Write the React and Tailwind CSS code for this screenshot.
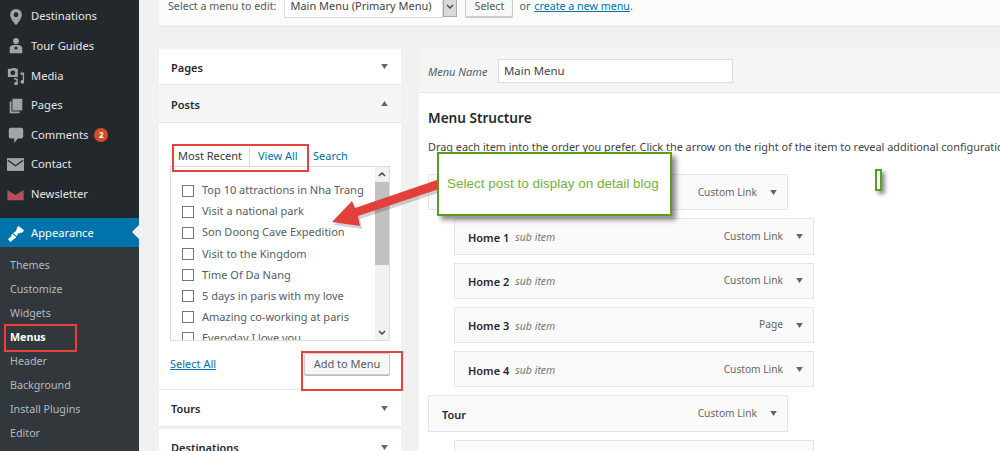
import React from "react";

const uiFont = { fontFamily: '"Noto Sans", "Open Sans", sans-serif' };

const PinIcon = () => (
  <svg viewBox="0 0 20 20" className="w-[18px] h-[18px]" fill="#a0a5aa">
    <path fillRule="evenodd" d="M10 1a6.5 6.5 0 0 0-6.5 6.5c0 3.6 4.2 9.4 6.5 11.5 2.3-2.1 6.5-7.9 6.5-11.5A6.5 6.5 0 0 0 10 1zm0 9.2a2.7 2.7 0 1 1 0-5.4 2.7 2.7 0 0 1 0 5.4z" />
  </svg>
);
const GuideIcon = () => (
  <svg viewBox="0 0 20 20" className="w-[18px] h-[18px]" fill="#a0a5aa">
    <path fillRule="evenodd" d="M10 1a3.3 3.3 0 0 1 3.3 3.5c0 1.9-1.4 3.5-3.3 3.5S6.7 6.4 6.7 4.5A3.3 3.3 0 0 1 10 1zM3 18v-5.500C3 10.500 5 9 7.500 9h5c2.500 0 4.500 1.500 4.500 3.500V18H3zm7-7.500a1.800 1.800 0 1 0 0 3.600 1.800 1.800 0 0 0 0-3.600z" />
  </svg>
);
const MediaIcon = () => (
  <svg viewBox="0 0 20 20" className="w-[18px] h-[18px]" fill="#a0a5aa">
    <path fillRule="evenodd" d="M1 2h4l1-1h3l1 1h2v9H1V2zm5.500 1.800a2.700 2.700 0 1 0 0 5.400 2.700 2.700 0 0 0 0-5.400zM14 6h5v10.500a2 2 0 1 1-1.500-1.900V8.500H15V6zM8 12l4 1v5.500a2 2 0 1 1-1.500-1.900V14.500L8 14v-2z" />
  </svg>
);
const PagesIcon = () => (
  <svg viewBox="0 0 20 20" className="w-[18px] h-[18px]" fill="#a0a5aa">
    <path d="M6 2h11v13H6V2zM3 5h2v11h9v2H3V5z" />
  </svg>
);
const CommentIcon = () => (
  <svg viewBox="0 0 20 20" className="w-[18px] h-[18px]" fill="#a0a5aa">
    <path d="M4 2h12a2 2 0 0 1 2 2v8a2 2 0 0 1-2 2h-4l-4 5v-5H4a2 2 0 0 1-2-2V4a2 2 0 0 1 2-2z" />
  </svg>
);
const MailIcon = () => (
  <svg viewBox="0 0 20 15" className="w-[17px] h-[13px]">
    <rect width="20" height="15" fill="#a0a5aa" />
    <path d="M1 2.5 10 9l9-6.5" fill="none" stroke="#23282d" strokeWidth="1.6" />
  </svg>
);
const NewsletterIcon = () => (
  <svg viewBox="0 0 20 16" className="w-[17px] h-[13px]" fill="#b5505f">
    <path d="M0 2.5 10 8.5l10-6V15H0V2.500z" />
  </svg>
);
const BrushIcon = () => (
  <svg viewBox="0 0 20 20" className="w-[18px] h-[18px]" fill="#ffffff">
    <path d="M10.5 3.5 13 1l6 5-2.500 3-1-1-1.500 1.500-1-.5-2.500 3.500-3.500-3.500 3.500-2.500-.5-1 1.500-1.500-1-1zM6 9.500l4.500 4.500-3 1.500L4 19l-3-3 3.500-3.500L6 9.500z" />
  </svg>
);

const topMenu = [
  { label: "Destinations", icon: <PinIcon /> },
  { label: "Tour Guides", icon: <GuideIcon /> },
  { label: "Media", icon: <MediaIcon /> },
  { label: "Pages", icon: <PagesIcon /> },
  { label: "Comments", icon: <CommentIcon />, badge: 2 },
  { label: "Contact", icon: <MailIcon /> },
  { label: "Newsletter", icon: <NewsletterIcon /> },
];

const subMenu = ["Themes", "Customize", "Widgets", "Menus", "Header", "Background", "Install Plugins", "Editor"];

const posts = [
  "Top 10 attractions in Nha Trang",
  "Visit a national park",
  "Son Doong Cave Expedition",
  "Visit to the Kingdom",
  "Time Of Da Nang",
  "5 days in paris with my love",
  "Amazing co-working at paris",
  "Everyday I love you",
];

// the first title sits under the callout and the last one below the fold
const menuItems = [
  { type: "Custom Link" },
  { title: "Home 1", sub: true, type: "Custom Link" },
  { title: "Home 2", sub: true, type: "Custom Link" },
  { title: "Home 3", sub: true, type: "Page" },
  { title: "Home 4", sub: true, type: "Custom Link" },
  { title: "Tour", type: "Custom Link" },
  { sub: true },
];

const Caret = ({ up }) => (
  <svg viewBox="0 0 8 6" className="w-[7px] h-[5px]" fill="#60686e">
    <path d={up ? "M4 0 8 6H0z" : "M0 0h8L4 6z"} />
  </svg>
);

const Sidebar = () => (
  <aside className="w-[139px] shrink-0 bg-[#23282d] text-[11.2px] text-[#e4e6e7] pt-px">
    {topMenu.map((item) => (
      <div key={item.label} className="h-[29.6px] pt-[2px] flex items-center">
        <span className="w-[31px] flex justify-center shrink-0">{item.icon}</span>
        <span>{item.label}</span>
        {item.badge && (
          <span className="ml-[6px] w-[14px] h-[14px] rounded-full bg-[#d54e21] text-white text-[8px] font-bold flex items-center justify-center">
            {item.badge}
          </span>
        )}
      </div>
    ))}
    <div className="h-[29px] mt-[10px] pt-[2px] bg-[#0073aa] text-white flex items-center relative">
      <span className="w-[31px] flex justify-center shrink-0">
        <BrushIcon />
      </span>
      <span>Appearance</span>
      <span className="absolute right-0 top-[7px] border-y-[7px] border-y-transparent border-r-[7px] border-r-[#f1f1f1]" />
    </div>
    <div className="bg-[#32373c] h-[204px] pt-[6px] text-[10.7px] text-[#b4b9be]">
      {subMenu.map((label) => (
        <div key={label} className={`h-[24px] pl-[10px] flex items-center ${label === "Menus" ? "text-white font-bold" : ""}`}>
          {label}
        </div>
      ))}
    </div>
  </aside>
);

const TopBar = () => (
  <div className="h-[27px] shrink-0 bg-[#fbfbfb] border-b border-[#e5e5e5] flex items-center pl-[9px] pb-[13px] text-[10.7px] text-[#555d66] whitespace-nowrap">
    <span>Select a menu to edit:</span>
    <div className="ml-[8px] w-[159px] h-[23px] shrink-0 bg-white border border-[#ddd] flex items-center pl-[5px] text-[11px] text-[#444]">
      Main Menu (Primary Menu)
    </div>
    <div className="w-[14px] h-[21px] shrink-0 bg-[#d9d9d9] border border-[#aaa] flex items-center justify-center">
      <svg viewBox="0 0 8 5" className="w-[8px] h-[5px]" fill="none" stroke="#444" strokeWidth="1.3">
        <path d="m1 1 3 3 3-3" />
      </svg>
    </div>
    <div className="ml-[8px] w-[48px] h-[21px] shrink-0 bg-[#f7f7f7] border border-[#ccc] rounded-[2px] shadow-[0_1px_0_#ccc] flex items-center justify-center">
      Select
    </div>
    <span className="ml-[6px]">or</span>
    <span className="ml-[4px] text-[#0073aa] underline">create a new menu</span>
    <span>.</span>
  </div>
);

const AccordionHead = ({ title, up, className = "" }) => (
  <div className={`shrink-0 flex items-center justify-between pl-[12px] pr-[13px] font-semibold text-[11px] text-[#23282d] ${className}`}>
    <span className="pt-[3px]">{title}</span>
    <Caret up={up} />
  </div>
);

const PostsBox = () => (
  <div className="h-[267px] shrink-0 bg-white border-b border-[#e5e5e5] px-[11px] pt-[24px] text-[11px]">
    <div className="h-[19px] flex items-center">
      <span className="pl-[8px] w-[79px] text-[#32373c]">Most Recent</span>
      <span className="w-[64px] h-full pl-[8px] border-l border-[#ddd] flex items-center text-[#0073aa]">View All</span>
      <span className="text-[#0073aa]">Search</span>
    </div>
    <div className="h-[175px] w-[220px] border border-[#ddd] flex overflow-hidden">
      <div className="flex-1 pl-[11px] pt-[13px] overflow-hidden">
        {posts.map((post) => (
          <div key={post} className="h-[21.1px] flex items-center text-[#555d66] whitespace-nowrap">
            <span className="w-[12px] h-[12px] border border-[#777] bg-white shrink-0 mr-[8px]" />
            <span>{post}</span>
          </div>
        ))}
      </div>
      <div className="w-[14px] bg-[#f1f1f1] flex flex-col items-center shrink-0">
        <div className="h-[15px] flex items-center">
          <svg viewBox="0 0 8 5" className="w-[8px] h-[5px]" fill="none" stroke="#444" strokeWidth="1.5">
            <path d="m1 4 3-3 3 3" />
          </svg>
        </div>
        <div className="w-full h-[83px] bg-[#c1c1c1]" />
        <div className="mt-auto h-[15px] flex items-center">
          <svg viewBox="0 0 8 5" className="w-[8px] h-[5px]" fill="none" stroke="#444" strokeWidth="1.5">
            <path d="m1 1 3 3 3-3" />
          </svg>
        </div>
      </div>
    </div>
    <div className="flex items-center justify-between w-[220px] mt-[12px]">
      <span className="text-[#0073aa] underline">Select All</span>
      <div className="w-[86px] h-[22px] bg-[#f7f7f7] border border-[#ccc] rounded-[2px] shadow-[0_1px_0_#bbb] flex items-center justify-center text-[#555d66]">
        Add to Menu
      </div>
    </div>
  </div>
);

const LeftColumn = () => (
  <div className="w-[242px] shrink-0 flex flex-col">
    <AccordionHead title="Pages" className="h-[36px] bg-white border-b border-[#e5e5e5]" />
    <AccordionHead title="Posts" up className="h-[38px] bg-[#f5f5f5] border-b border-[#e5e5e5]" />
    <PostsBox />
    <AccordionHead title="Tours" className="h-[37px] bg-white border-b border-[#e5e5e5]" />
    <div className="h-[2px] shrink-0" />
    <AccordionHead title="Destinations" className="h-[36px] bg-white" />
  </div>
);

const MenuItem = ({ item }) => (
  <div className={`w-[360px] h-[36.3px] shrink-0 bg-[#fafafa] border border-[#e5e5e5] flex items-center pl-[13px] pr-[10px] ${item.sub ? "ml-[26px]" : ""}`}>
    {item.title && <span className="pt-[3px] font-semibold text-[11px] text-[#23282d]">{item.title}</span>}
    {item.title && item.sub && <span className="pt-[3px] ml-[6px] italic text-[10.5px] text-[#777]">sub item</span>}
    {item.type && <span className="ml-auto text-[10.2px] text-[#666]">{item.type}</span>}
    {item.type && (
      <span className="ml-[13px]">
        <Caret />
      </span>
    )}
  </div>
);

const RightPanel = () => (
  <div className="ml-[18px] flex-1 bg-white flex flex-col overflow-hidden">
    <div className="h-[44px] shrink-0 bg-[#f5f5f5] border-b border-[#e5e5e5] flex items-center pl-[9px]">
      <span className="pt-[3px] italic text-[11px] text-[#555d66] w-[70px]">Menu Name</span>
      <div className="w-[235px] h-[24px] pt-[1px] bg-white border border-[#ddd] flex items-center pl-[5px] text-[11.4px] text-[#444]">
        Main Menu
      </div>
    </div>
    <h2 className="mt-[14px] shrink-0 pl-[9px] font-semibold text-[13.6px] leading-[22px] text-[#23282d]">Menu Structure</h2>
    <p className="mt-[9px] shrink-0 pl-[9px] text-[10.9px] leading-[18px] text-[#444] whitespace-nowrap">
      Drag each item into the order you prefer. Click the arrow on the right of the item to reveal additional configuration options.
    </p>
    <div className="mt-[18px] pl-[9px] flex flex-col gap-[8px]">
      {menuItems.map((item, i) => (
        <MenuItem key={i} item={item} />
      ))}
    </div>
  </div>
);

const Annotations = () => (
  <>
    <div className="absolute left-[172px] top-[144px] w-[137px] h-[28px] border-[2.5px] border-[#e8413c]" />
    <div className="absolute left-[4px] top-[324px] w-[73px] h-[28px] border-[2.5px] border-[#e8413c]" />
    <div className="absolute left-[301px] top-[351px] w-[102px] h-[40px] border-[2.5px] border-[#e8413c]" />
    <svg className="absolute left-[325px] top-[175px] w-[120px] h-[60px]" viewBox="0 0 120 60">
      <path d="M7 47 27 26 30 33 112 5 114 14 33 41 35 51z" fill="#000" opacity="0.18" transform="translate(2 3)" />
      <path d="M7 47 27 26 30 33 112 5 114 14 33 41 35 51z" fill="#e2403a" />
    </svg>
    <div className="absolute left-[437px] top-[152px] w-[235px] h-[64px] bg-white border-[2.5px] border-[#5a9e1f] shadow-[4px_4px_5px_rgba(0,0,0,0.45)] flex items-center pl-[8px] text-[13.5px] text-[#76b043] whitespace-nowrap" style={{ fontFamily: '"Liberation Sans", sans-serif' }}>
      Select post to display on detail blog
    </div>
    <div className="absolute left-[875px] top-[169px] w-[7px] h-[22px] bg-white border-2 border-[#5a9e1f] shadow-[3px_3px_4px_rgba(0,0,0,0.45)]" />
  </>
);

export default function App() {
  return (
    <div className="relative w-[1000px] h-[451px] overflow-hidden flex bg-[#f1f1f1]" style={uiFont}>
      <Sidebar />
      <main className="flex-1 min-w-0 pl-[20px] flex flex-col overflow-hidden">
        <TopBar />
        <div className="mt-[22px] flex flex-1 min-h-0">
          <LeftColumn />
          <RightPanel />
        </div>
      </main>
      <Annotations />
    </div>
  );
}
